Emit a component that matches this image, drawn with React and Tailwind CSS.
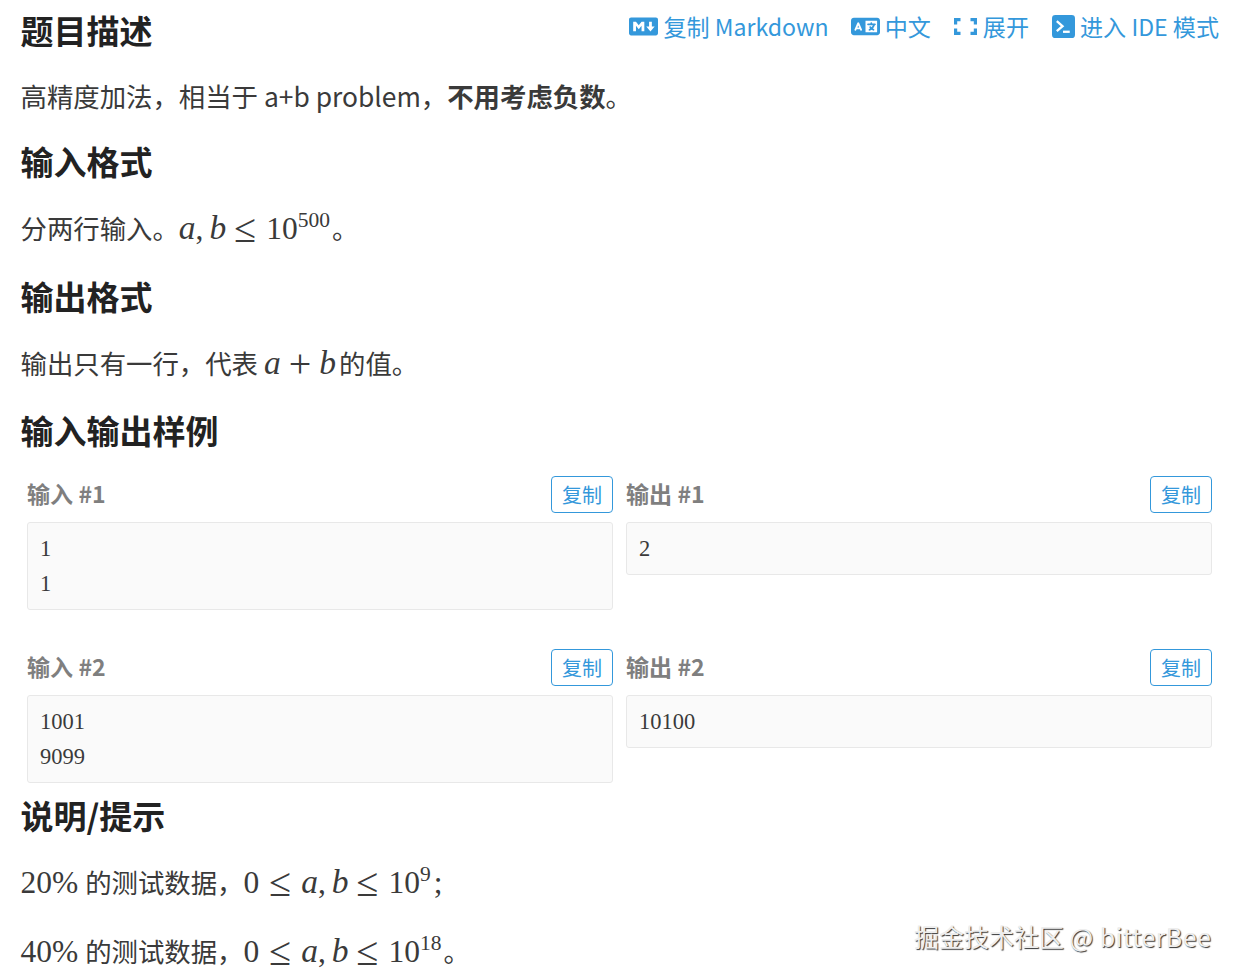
import React from "react";
import { FaMarkdown, FaLanguage } from "react-icons/fa6";

const Terminal = () => (
  <svg viewBox="0 0 24 24" className="w-[23px] h-[23px] shrink-0">
    <rect x="0" y="0" width="24" height="24" rx="3.5" fill="currentColor" />
    <path d="M5 6.500l6 5.200-6 5.200" fill="none" stroke="#fff" strokeWidth="2.4" />
    <path d="M11.500 17.500h7" fill="none" stroke="#fff" strokeWidth="2.4" />
  </svg>
);

const Expand = () => (
  <svg viewBox="0 0 23 17" className="w-[23px] h-[17px] shrink-0" fill="none" stroke="currentColor" strokeWidth="3.2">
    <path d="M1.600 6.500V1.600H6.500" />
    <path d="M16.500 1.600h4.900V6.500" />
    <path d="M1.600 10.500v4.900H6.500" />
    <path d="M16.500 15.400h4.900V10.500" />
  </svg>
);

const H = ({ children, className = "" }) => (
  <h2 className={`text-[33px] leading-[44px] font-bold text-[#222222] ${className}`}>{children}</h2>
);
const P = ({ children, className = "" }) => (
  <p className={`text-[26.4px] leading-[44px] text-[#3a3a3a] whitespace-nowrap ${className}`}>{children}</p>
);
const M = ({ children, className = "" }) => (
  <span className={`font-['Liberation_Serif',serif] text-[31.5px] leading-none ${className}`}>{children}</span>
);
const I = ({ children }) => <i className="italic text-[33.5px] leading-none">{children}</i>;
const Comma = () => <span className="mr-[6px] leading-none">,</span>;
const Sup = ({ children }) => (
  <span className="text-[21.5px] relative -top-[12px] leading-none">{children}</span>
);
const Le = ({ className = "ml-[8px]" }) => (
  <span className={`text-[40px] mr-[10px] leading-none relative top-[3px] ${className}`}>≤</span>
);
const Pct = () => <span className="mr-[1px] leading-none">%</span>;

const Action = ({ icon, children, className = "" }) => (
  <a className={`flex items-center gap-[5px] ${className}`}>
    {icon}
    <span>{children}</span>
  </a>
);

const Sample = ({ label, lines }) => (
  <div className="min-w-0">
    <div className="flex items-center justify-between h-[37px]">
      <span className="text-[23.1px] font-bold text-[#7f7f7f] mb-[3px]">{label}</span>
      <button className="w-[62px] h-[37px] border border-[#3498db] rounded-[4px] text-[20px] leading-none text-[#3498db]">
        复制
      </button>
    </div>
    <pre className="mt-[9px] border border-[#e8e8e8] bg-[#fafafa] rounded-[3px] px-[12px] py-[8px] font-['Liberation_Serif',serif] text-[22.5px] leading-[35px] text-[#3a3a3a]">
      {lines.map((l) => (
        <div key={l}>{l}</div>
      ))}
    </pre>
  </div>
);

export default function App() {
  return (
    <div className="relative h-[979px] overflow-hidden bg-white pl-[20.5px] pr-[20px] pt-[8px] font-['Noto_Sans_CJK_SC','Noto_Sans',sans-serif]">
      <div className="flex items-center justify-between">
        <H>题目描述</H>
        <div className="flex items-center gap-[23px] text-[23.1px] leading-[40px] text-[#3498db] whitespace-nowrap -mt-[8px]">
          <Action icon={<FaMarkdown className="w-[29px] h-[29px]" />}>复制 Markdown</Action>
          <Action className="-ml-[1px]" icon={<FaLanguage className="w-[29px] h-[29px]" />}>中文</Action>
          <Action className="gap-[6px]" icon={<Expand />}>展开</Action>
          <Action icon={<Terminal />}>进入 IDE 模式</Action>
        </div>
      </div>
      <P className="mt-[22px]">高精度加法，相当于 a+b problem，<b className="font-bold">不用考虑负数</b>。</P>
      <H className="mt-[21px]">输入格式</H>
      <P className="mt-[23px]">
        分两行输入。<M className="mr-[2px]"><I>a</I><Comma /><I>b</I><Le />10<Sup>500</Sup></M>。
      </P>
      <H className="mt-[24px]">输出格式</H>
      <P className="mt-[23px]">
        输出只有一行，代表 <M><I>a</I><span className="text-[40px] leading-none mx-[8px] relative top-[3px]">+</span><I>b</I></M><span className="ml-[3px]">的值。</span>
      </P>
      <H className="mt-[23px]">输入输出样例</H>
      <div className="mt-[24px] ml-[6.500px] mr-[7px] grid grid-cols-2 gap-x-[13px] gap-y-[39px] items-start">
        <Sample label="输入 #1" lines={["1 ", "1"]} />
        <Sample label="输出 #1" lines={["2"]} />
        <Sample label="输入 #2" lines={["1001", "9099"]} />
        <Sample label="输出 #2" lines={["10100"]} />
      </div>
      <H className="mt-[10px]">说明/提示</H>
      <P className="mt-[23px]">
        <M>20<Pct /></M> 的测试数据，<M>0<Le className="ml-[10px]" /><I>a</I><Comma /><I>b</I><Le />10<Sup>9</Sup><span className="ml-[3px]">;</span></M>
      </P>
      <P className="mt-[25px]">
        <M className="mr-0">40<Pct /></M> 的测试数据，<M className="mr-[2px]">0<Le className="ml-[10px]" /><I>a</I><Comma /><I>b</I><Le />10<Sup>18</Sup></M>。
      </P>
      <div className="absolute left-[914px] top-[918px] text-[25px] leading-[36px] whitespace-nowrap text-[#eeeeee] [text-shadow:1px_1px_1px_#333333]">
        掘金技术社区 <span className="tracking-[0.4px]">@ bitterBee</span>
      </div>
    </div>
  );
}
